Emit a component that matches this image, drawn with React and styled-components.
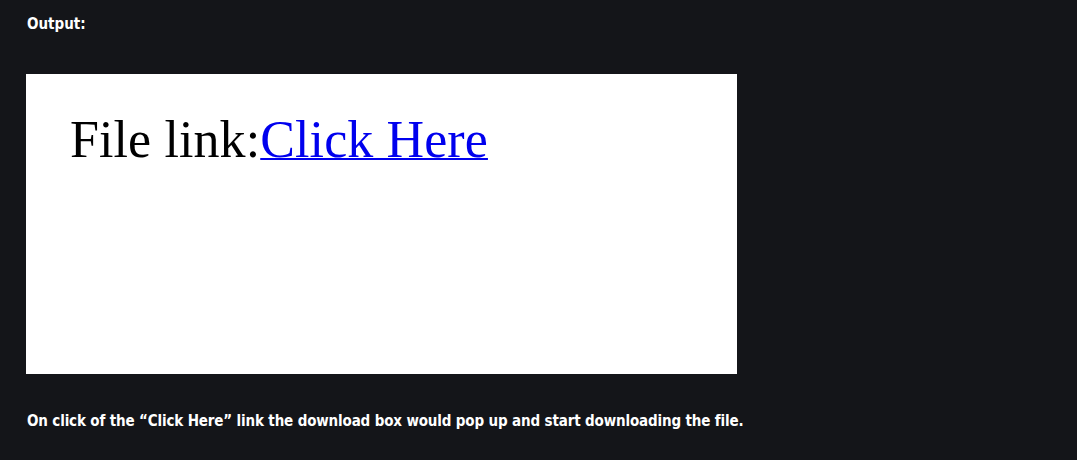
import React from 'react';
import styled, { createGlobalStyle } from 'styled-components';

const GlobalStyle = createGlobalStyle`
    body{
        margin: 0;
        background: #141519;
    }
`;

const Page = styled.div`
    padding: 14px 26px 0;
    font-family: "DejaVu Sans Condensed", "DejaVu Sans", sans-serif;
    font-stretch: condensed;
    color: #ffffff;
    height: 460px;
    box-sizing: border-box;
`;

const Heading = styled.h4`
    margin: 0 0 0 1px;
    font-size: 15px;
    font-weight: 700;
    line-height: 20px;
`;

const OutputFrame = styled.div`
    margin-top: 40px;
    width: 711px;
    height: 300px;
    background: #ffffff;
    padding: 36px 0 0 44px;
    box-sizing: border-box;
    font-family: "Liberation Serif", "Times New Roman", serif;
    font-size: 52px;
    letter-spacing: 0.1px;
    color: #000000;
    a{
        color: #0000ee;
        text-decoration: underline;
        text-decoration-thickness: 2px;
    }
`;

const Note = styled.p`
    margin: 37px 0 0 1px;
    font-size: 15px;
    font-weight: 700;
    line-height: 20px;
    letter-spacing: -0.15px;
`;

function App() {
    return (
        <>
            <GlobalStyle />
            <Page>
                <Heading>Output:</Heading>
                <OutputFrame>
                    File link:<a href="#">Click Here</a>
                </OutputFrame>
                <Note>On click of the “Click Here” link the download box would pop up and start downloading the file.</Note>
            </Page>
        </>
    )
}

export default App
